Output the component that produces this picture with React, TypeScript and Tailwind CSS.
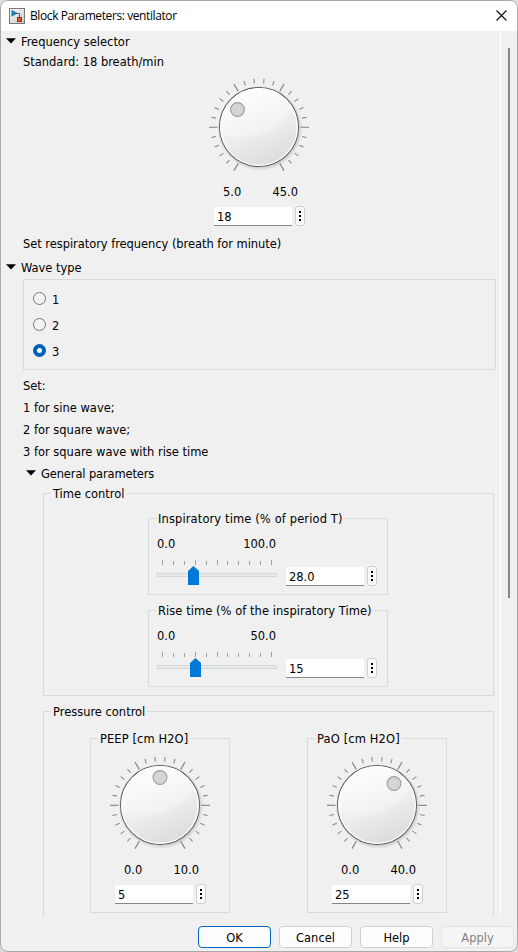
import type { ReactNode } from "react";

function Dial({ hx, hy, id }: { hx: number; hy: number; id: string }) {
  const ticks = Array.from({ length: 26 }, (_, i) => {
    const a = ((240 - i * 12) * Math.PI) / 180;
    const long = i % 5 === 0;
    const r1 = long ? 41.5 : 44;
    const r2 = long ? 50 : 48.7;
    return { a, r1, r2, long };
  });
  return (
    <svg width="104" height="104" viewBox="-52 -52 104 104" className="block shrink-0">
      <defs>
        <linearGradient id={id + "f"} x1="0.3" y1="0" x2="0.7" y2="1">
          <stop offset="0" stopColor="#fcfcfc" />
          <stop offset="0.5" stopColor="#efefef" />
          <stop offset="1" stopColor="#dadada" />
        </linearGradient>
        <linearGradient id={id + "g"} x1="0.3" y1="0" x2="0.6" y2="1">
          <stop offset="0" stopColor="#ffffff" stopOpacity="0.45" />
          <stop offset="1" stopColor="#ffffff" stopOpacity="0.2" />
        </linearGradient>
        <radialGradient id={id + "s"}>
          <stop offset="0.88" stopColor="#000" stopOpacity="0.2" />
          <stop offset="1" stopColor="#000" stopOpacity="0" />
        </radialGradient>
        <clipPath id={id + "c"}>
          <circle r="38.6" />
        </clipPath>
      </defs>
      {ticks.map((t, i) => (
        <line
          key={i}
          x1={t.r1 * Math.cos(t.a)}
          y1={-t.r1 * Math.sin(t.a) + 0.3}
          x2={t.r2 * Math.cos(t.a)}
          y2={-t.r2 * Math.sin(t.a) + 0.3}
          stroke={t.long ? "#808080" : "#8c8c8c"}
          strokeWidth="1.1"
        />
      ))}
      <circle cx="1" cy="1.3" r="42.5" fill={`url(#${id}s)`} />
      <circle r="39.5" fill={`url(#${id}f)`} stroke="#5c5c5c" strokeWidth="1.1" />
      <g clipPath={`url(#${id}c)`}>
        <path d="M-40 7 C-18 14 22 14 37 -26 L38 -42 L-40 -42 Z" fill={`url(#${id}g)`} />
      </g>
      <circle r="38.3" fill="none" stroke="#ffffff" strokeWidth="1.2" />
      <circle cx={hx} cy={hy} r="6.9" fill="#d5d5d5" stroke="#9c9c9c" strokeWidth="1.1" />
    </svg>
  );
}

function Field({ value }: { value: string }) {
  return (
    <div className="flex h-5 items-end gap-[3px]">
      <div className="h-[19px] w-[78px] border-b border-[#868686] bg-white pl-[3px] leading-[19px]">{value}</div>
      <div className="flex h-5 w-[10px] flex-col items-center justify-center gap-[2px] rounded-[3px] border border-[#cfcfcf] bg-[#fbfbfb]">
        <i className="size-[2px] bg-black" />
        <i className="size-[2px] bg-black" />
        <i className="size-[2px] bg-black" />
      </div>
    </div>
  );
}

function Arrow() {
  return (
    <svg width="10" height="6" viewBox="0 0 10 6" className="block">
      <path d="M0 0.2H10L5 5.4Z" fill="#000" />
    </svg>
  );
}

function Group({ title, className, children }: { title: ReactNode; className: string; children: ReactNode }) {
  return (
    <div className={"flex flex-col border border-[#dadada] " + className}>
      <div className="-mt-[11px] ml-[7px] h-5 self-start bg-[#f0f0f0] px-[2px] leading-[22px]">{title}</div>
      {children}
    </div>
  );
}

function SliderBox({ title, max, value, thumb }: { title: ReactNode; max: string; value: string; thumb: number }) {
  return (
    <Group title={title} className="ml-[104px] h-[77px] w-60">
      <div className="ml-2 mt-[5px] flex h-5 w-[119px] justify-between leading-[22px]">
        <span>0.0</span>
        <span>{max}</span>
      </div>
      <div className="ml-2 mt-[7px] flex">
        <svg width="121" height="26" viewBox="0 0 121 26" className="block" shapeRendering="crispEdges">
          {[5, 16, 27, 38, 49, 60, 70, 81, 92, 103, 114].map((x, i) => (
            <rect key={x} x={x} y={i % 5 === 0 || i === 3 ? 0 : 1} width="1" height={i % 5 === 0 || i === 3 ? 5 : 4} fill="#a5a294" />
          ))}
          <rect x="0.5" y="13.5" width="119" height="3" fill="#e7eaea" stroke="#d6d6d6" />
          <path d={`M${thumb} 11L${thumb + 5.5} 6L${thumb + 11} 11V25H${thumb}Z`} fill="#0078d7" shapeRendering="auto" />
        </svg>
        <div className="ml-2 mt-[6px]">
          <Field value={value} />
        </div>
      </div>
    </Group>
  );
}

function DialBox({ title, className, max, value, hx, hy, id }: { title: ReactNode; className: string; max: string; value: string; hx: number; hy: number; id: string }) {
  return (
    <Group title={title} className={"h-[175px] w-[140px] " + className}>
      <div className="ml-[17px] mt-[5px]">
        <Dial hx={hx} hy={hy} id={id} />
      </div>
      <div className="ml-[33px] mt-[2px] flex h-5 w-[75px] justify-between leading-[22px]">
        <span>0.0</span>
        <span>{max}</span>
      </div>
      <div className="ml-6 mt-[5px]">
        <Field value={value} />
      </div>
    </Group>
  );
}

function Radio({ label, on }: { label: string; on?: boolean }) {
  return (
    <div className="flex h-[26px] items-center gap-[6px]">
      <span className={"size-[13px] rounded-full " + (on ? "border-4 border-[#005fb8] bg-white" : "border border-[#777] bg-[#f3f3f3]")} />
      <span className="pt-[3px]">{label}</span>
    </div>
  );
}

export default function App() {
  return (
    <div className="h-[952px] w-[518px] bg-[#dedede] font-['DejaVu_Sans_Condensed','DejaVu_Sans','Noto_Sans',sans-serif] text-[12.75px] leading-[18px] whitespace-nowrap text-black">
      <div className="flex h-full flex-col overflow-hidden rounded-lg border border-[#a9a9a9] bg-[#f0f0f0]">
        <div className="flex h-[30px] shrink-0 items-center bg-white pl-2 pr-[10px]">
          <svg width="16" height="16" viewBox="0 0 16 16" className="block">
            <defs>
              <linearGradient id="ic" x1="0" y1="0" x2="1" y2="1">
                <stop offset="0" stopColor="#fff" />
                <stop offset="1" stopColor="#c4c4c4" />
              </linearGradient>
            </defs>
            <rect x="0.5" y="0.5" width="15" height="15" fill="url(#ic)" stroke="#777" />
            <path d="M7 5.5H10.5V9" fill="none" stroke="#3b5f78" />
            <path d="M2.8 2.3L8 5.2L2.8 8.3Z" fill="#1686bd" stroke="#17658f" strokeWidth="0.6" />
            <rect x="8.5" y="9.5" width="4" height="4" fill="#dc5a24" stroke="#9c3212" />
          </svg>
          <span className="ml-[5px] font-['Open_Sans','Noto_Sans',sans-serif] text-[12px] tracking-[-0.4px]">Block Parameters: ventilator</span>
          <svg width="11" height="11" viewBox="0 0 11 11" className="mb-[2px] ml-auto block">
            <path d="M0.5 0.5L10.5 10.5M10.5 0.5L0.5 10.5" stroke="#111" strokeWidth="1.2" />
          </svg>
        </div>
        <div className="flex h-[886px] shrink-0 overflow-hidden">
          <div className="flex h-full w-[499px] shrink-0 flex-col">
            <div className="ml-[5px] flex h-5 shrink-0 items-center gap-[5px]">
              <Arrow />
              <span className="pt-[2px]">Frequency selector</span>
            </div>
            <div className="ml-[22px] h-5 shrink-0 leading-[22px]">Standard: 18 breath/min</div>
            <div className="ml-[206px] mt-1 shrink-0">
              <Dial hx={-21.5} hy={-17.5} id="a" />
            </div>
            <div className="ml-[222px] mt-[2px] flex h-5 w-[75px] shrink-0 justify-between leading-[22px]">
              <span>5.0</span>
              <span>45.0</span>
            </div>
            <div className="ml-[213px] mt-[5px] shrink-0">
              <Field value="18" />
            </div>
            <div className="ml-[22px] mt-[7px] h-5 shrink-0 leading-[22px] tracking-[-0.04px]">Set respiratory frequency (breath for minute)</div>
            <div className="ml-[5px] mt-1 flex h-5 shrink-0 items-center gap-[5px]">
              <Arrow />
              <span className="pt-[2px]">Wave type</span>
            </div>
            <div className="ml-[22px] mt-[2px] h-[91px] w-[473px] shrink-0 border border-[#dadada] pl-[9px] pt-[5px]">
              <Radio label="1" />
              <Radio label="2" />
              <Radio label="3" on />
            </div>
            <div className="ml-[22px] mt-[5px] shrink-0 leading-[22px]">
              <div>Set:</div>
              <div>1 for sine wave;</div>
              <div>2 for square wave;</div>
              <div>3 for square wave with rise time</div>
            </div>
            <div className="ml-[25px] flex h-5 shrink-0 items-center gap-[5px]">
              <Arrow />
              <span className="pt-[2px] tracking-[-0.12px]">General parameters</span>
            </div>
            <Group title="Time control" className="ml-[42px] mt-[10px] h-[203px] w-[451px] shrink-0">
              <div className="mt-[15px] flex flex-col gap-[15px]">
                <SliderBox title={<span className="tracking-[0.13px]">Inspiratory time (% of period T)</span>} max="100.0" value="28.0" thumb={31} />
                <SliderBox title={<span className="tracking-[0.06px]">Rise time (% of the inspiratory Time)</span>} max="50.0" value="15" thumb={33} />
              </div>
            </Group>
            <Group title="Pressure control" className="ml-[42px] mt-[15px] h-[230px] w-[451px] shrink-0">
              <div className="mt-[17px] flex">
                <DialBox title={<span className="tracking-[0.1px]">PEEP [cm H2O]</span>} className="ml-[46px]" max="10.0" value="5" hx={0} hy={-27.5} id="b" />
                <DialBox title={<span className="tracking-[0.15px]">PaO [cm H2O]</span>} className="ml-[77px]" max="40.0" value="25" hx={17} hy={-21.5} id="c" />
              </div>
            </Group>
          </div>
          <div className="w-px shrink-0 bg-white" />
          <div className="ml-[7px] mt-[17px] h-[550px] w-[2px] bg-[#868686]" />
        </div>
        <div className="flex shrink-0 gap-2 pl-[197px] pt-[9px] text-center leading-[21px]">
          <div className="h-[22px] w-[73px] rounded border border-[#0067c0] bg-[#fdfdfd]">OK</div>
          <div className="h-[22px] w-[73px] rounded border border-[#d0d0d0] bg-[#fdfdfd]">Cancel</div>
          <div className="h-[22px] w-[73px] rounded border border-[#d0d0d0] bg-[#fdfdfd]">Help</div>
          <div className="h-[22px] w-[73px] rounded border border-[#e3e3e3] bg-[#f5f5f5] text-[#838383]">Apply</div>
        </div>
      </div>
    </div>
  );
}
